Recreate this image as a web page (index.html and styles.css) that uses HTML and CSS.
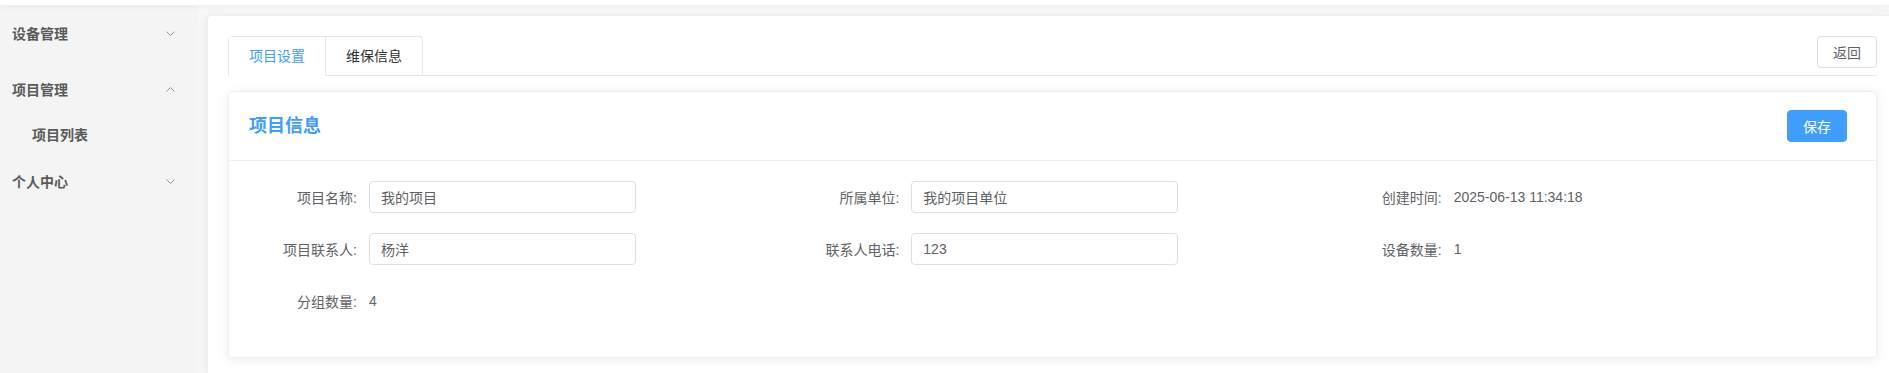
FILE: index.html
```html
<!DOCTYPE html>
<html lang="zh-CN">
<head>
    <meta charset="UTF-8">
    <meta name="viewport" content="width=device-width, initial-scale=1.0">
    <title>项目设置</title>
    <link rel="stylesheet" href="styles.css">
</head>
<body>
    <div class="topbar"></div>

    <div class="layout">
        <!-- Sidebar menu -->
        <aside class="sidebar">
            <div class="menu-item">
                <span>设备管理</span>
                <svg class="arrow" width="9" height="5" viewBox="0 0 9 5"><polyline points="0.5,0.5 4.5,4.5 8.5,0.5" fill="none" stroke="#909399" stroke-width="1"/></svg>
            </div>
            <div class="menu-item">
                <span>项目管理</span>
                <svg class="arrow" width="9" height="5" viewBox="0 0 9 5"><polyline points="0.5,4.5 4.5,0.5 8.5,4.5" fill="none" stroke="#909399" stroke-width="1"/></svg>
            </div>
            <div class="submenu-item">项目列表</div>
            <div class="menu-item">
                <span>个人中心</span>
                <svg class="arrow" width="9" height="5" viewBox="0 0 9 5"><polyline points="0.5,0.5 4.5,4.5 8.5,0.5" fill="none" stroke="#909399" stroke-width="1"/></svg>
            </div>
        </aside>

        <main class="main">
            <div class="card">
                <!-- Tabs + back button -->
                <div class="tabs-header">
                    <div class="tabs">
                        <div class="tab active">项目设置</div>
                        <div class="tab">维保信息</div>
                    </div>
                    <button class="btn">返回</button>
                </div>

                <!-- Project info box -->
                <div class="info-box">
                    <div class="info-header">
                        <h2>项目信息</h2>
                        <button class="btn btn-primary">保存</button>
                    </div>
                    <div class="info-body">
                        <div class="row">
                            <div class="col">
                                <div class="form-item">
                                    <label>项目名称:</label>
                                    <input type="text" value="我的项目">
                                </div>
                                <div class="form-item">
                                    <label>项目联系人:</label>
                                    <input type="text" value="杨洋">
                                </div>
                                <div class="form-item">
                                    <label>分组数量:</label>
                                    <span class="value">4</span>
                                </div>
                            </div>
                            <div class="col">
                                <div class="form-item">
                                    <label>所属单位:</label>
                                    <input type="text" value="我的项目单位">
                                </div>
                                <div class="form-item">
                                    <label>联系人电话:</label>
                                    <input type="text" value="123">
                                </div>
                            </div>
                            <div class="col">
                                <div class="form-item">
                                    <label>创建时间:</label>
                                    <span class="value">2025-06-13 11:34:18</span>
                                </div>
                                <div class="form-item">
                                    <label>设备数量:</label>
                                    <span class="value">1</span>
                                </div>
                            </div>
                        </div>
                    </div>
                </div>
            </div>
        </main>
    </div>
</body>
</html>
```

FILE: styles.css
```css
* {
    box-sizing: border-box;
    margin: 0;
    padding: 0;
}

body {
    font-family: 'Liberation Sans', 'Noto Sans CJK SC', sans-serif;
    font-size: 14px;
    color: #606266;
    background-color: #f7f7f7;
    height: 373px;
    overflow: hidden;
}

.topbar {
    height: 5px;
    background-color: #fff;
    box-shadow: 0 1px 6px rgba(0, 0, 0, 0.06);
    position: relative;
    z-index: 1;
}

.layout {
    display: flex;
    height: 368px;
}

/* Sidebar */
.sidebar {
    width: 197px;
    flex-shrink: 0;
    background-color: #f4f4f4;
}

.menu-item {
    height: 56px;
    display: flex;
    align-items: center;
    justify-content: space-between;
    padding: 0 22px 0 12px;
    font-weight: bold;
    color: #5a5a5a;
}

.submenu-item {
    height: 36px;
    line-height: 36px;
    padding-left: 32px;
    font-weight: bold;
    color: #5a5a5a;
}

/* Main area */
.main {
    flex: 1;
    padding: 10px 0 0 10px;
    min-width: 0;
    overflow: hidden;
}

.card {
    background-color: #fff;
    border: 1px solid #ebeef5;
    border-right: none;
    border-bottom: none;
    border-radius: 4px 0 0 0;
    box-shadow: 0 2px 12px rgba(0, 0, 0, 0.06);
    padding: 20px 12px 0 20px;
    height: 100%;
}

.tabs-header {
    display: flex;
    justify-content: space-between;
    align-items: flex-start;
    height: 40px;
    border-bottom: 1px solid #e4e7ed;
}

.tabs {
    display: flex;
    border: 1px solid #e4e7ed;
    border-bottom: none;
    border-radius: 4px 4px 0 0;
    height: 40px;
}

.tab {
    height: 39px;
    line-height: 39px;
    padding: 0 20px;
    color: #303133;
}

.tab + .tab {
    border-left: 1px solid #e4e7ed;
}

.tab.active {
    color: #409eff;
    background-color: #fff;
}

.btn {
    font-family: inherit;
    font-size: 14px;
    width: 60px;
    height: 32px;
    border: 1px solid #dcdfe6;
    border-radius: 4px;
    background-color: #fff;
    color: #606266;
    cursor: pointer;
}

.btn-primary {
    background-color: #409eff;
    border-color: #409eff;
    color: #fff;
}

/* Project info box */
.info-box {
    margin-top: 15px;
    border: 1px solid #ebeef5;
    border-radius: 4px;
    box-shadow: 0 2px 12px rgba(0, 0, 0, 0.08);
}

.info-header {
    display: flex;
    justify-content: space-between;
    align-items: center;
    padding: 18px 29px 18px 20px;
    border-bottom: 1px solid #ebeef5;
}

.info-header h2 {
    font-size: 18px;
    color: #409eff;
    line-height: 32px;
}

.info-body {
    padding: 20px;
}

.row {
    display: flex;
    margin: 0 -10px;
}

.col {
    width: 33.3333%;
    padding: 0 10px;
}

.form-item {
    display: flex;
    align-items: center;
    height: 32px;
    margin-bottom: 20px;
}

.form-item label {
    width: 120px;
    flex-shrink: 0;
    text-align: right;
    padding-right: 12px;
    color: #606266;
}

.form-item input {
    width: 267px;
    height: 32px;
    padding: 0 11px;
    border: 1px solid #dcdfe6;
    border-radius: 4px;
    font-family: inherit;
    font-size: 14px;
    color: #606266;
    outline: none;
}

.value {
    color: #606266;
}
```
